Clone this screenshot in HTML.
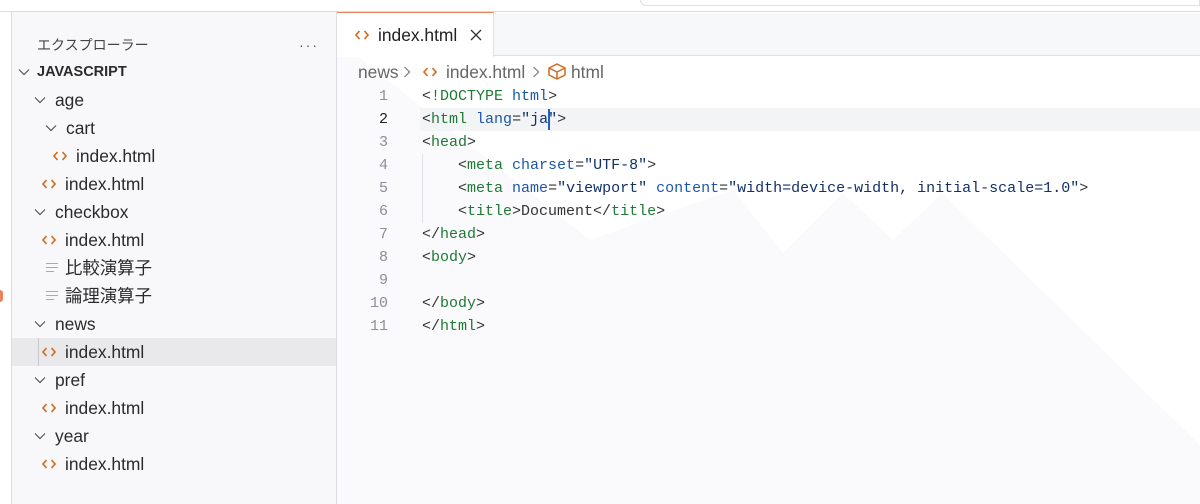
<!DOCTYPE html>
<html><head><meta charset="utf-8">
<style>
*{margin:0;padding:0;box-sizing:border-box}
body{width:1200px;height:504px;overflow:hidden;background:#fff;position:relative;font-family:"Liberation Sans","Noto Sans CJK JP",sans-serif;color:#333}
.abs{position:absolute}
#top{left:0;top:0;width:1200px;height:12px;background:#fff;border-bottom:1px solid #dcdde2}
#side{left:11px;top:12px;width:326px;height:492px;background:#f8f8fa;border-left:1px solid #dcdde2;border-right:1px solid #dcdde2}
.row{position:absolute;left:0;width:324px;height:28px;line-height:28px;font-size:17.4px;color:#2b2b2b;white-space:nowrap}
.chev{position:absolute;top:10px}
.ic{position:absolute;top:9px}
.lines{position:absolute;width:12px}
.lines i{display:block;height:1.2px;background:#aaa;margin-bottom:2.6px}
#tabbar{left:337px;top:13px;width:863px;height:43px;background:#f7f8fa;border-bottom:1px solid #dde0e8}
#tab{left:337px;top:12px;width:157px;height:45px;background:#fff;border-top:1px solid #e8835a;border-right:1px solid #dde0e8}
.code{position:absolute;left:422px;font-family:"Liberation Mono",monospace;font-size:15px;line-height:23px;white-space:pre;color:#333}
.ln{position:absolute;left:340px;width:48px;text-align:right;font-family:"Liberation Mono",monospace;font-size:15px;line-height:23px;color:#8a8f99}
.t{color:#1e7a34}.a{color:#1c58a8}.s{color:#13306a}
</style></head><body>
<svg width="0" height="0" style="position:absolute"><defs>
<symbol id="h" viewBox="0 0 14 10"><path d="M4.5 1 L1 5 L4.5 9 M9.5 1 L13 5 L9.5 9" fill="none" stroke="#d2691e" stroke-width="1.6"/></symbol>
<symbol id="c" viewBox="0 0 12 8"><path d="M1 1.5 L6 6.5 L11 1.5" fill="none" stroke="#555" stroke-width="1.2"/></symbol>
</defs></svg>
<div id="top" class="abs"></div>
<div class="abs" style="left:640px;top:0;width:560px;height:6px;border:1px solid #e0e0e0;border-top:none;border-radius:0 0 0 6px"></div>
<div id="side" class="abs">
 <div class="row" style="top:19px;left:25px;font-size:14px;color:#444">エクスプローラー</div>
 <div class="row" style="top:19px;left:287px;font-size:14px;color:#555;letter-spacing:2px">···</div>
 <div class="row" style="top:46px;left:0"><svg class="chev" style="left:6px" width="12" height="8"><use href="#c"/></svg><span style="position:absolute;left:25px;font-weight:bold;font-size:14.5px">JAVASCRIPT</span></div>
 <div class="row" style="top:74px"><svg class="chev" style="left:22px" width="12" height="8"><use href="#c"/></svg><span style="position:absolute;left:43px">age</span></div>
 <div class="row" style="top:102px"><svg class="chev" style="left:33px" width="12" height="8"><use href="#c"/></svg><span style="position:absolute;left:54px">cart</span></div>
 <div class="row" style="top:130px"><svg class="ic" style="left:41px" width="14" height="10"><use href="#h"/></svg><span style="position:absolute;left:64px">index.html</span></div>
 <div class="row" style="top:158px"><svg class="ic" style="left:30px" width="14" height="10"><use href="#h"/></svg><span style="position:absolute;left:53px">index.html</span></div>
 <div class="row" style="top:186px"><svg class="chev" style="left:22px" width="12" height="8"><use href="#c"/></svg><span style="position:absolute;left:43px">checkbox</span></div>
 <div class="row" style="top:214px"><svg class="ic" style="left:30px" width="14" height="10"><use href="#h"/></svg><span style="position:absolute;left:53px">index.html</span></div>
 <div class="row" style="top:242px"><span class="lines" style="left:34px;top:9px"><i></i><i></i><i style="width:8px"></i></span><span style="position:absolute;left:53px">比較演算子</span></div>
 <div class="row" style="top:270px"><span class="lines" style="left:34px;top:9px"><i></i><i></i><i style="width:8px"></i></span><span style="position:absolute;left:53px">論理演算子</span></div>
 <div class="row" style="top:298px"><svg class="chev" style="left:22px" width="12" height="8"><use href="#c"/></svg><span style="position:absolute;left:43px">news</span></div>
 <div class="row" style="top:326px;background:#e9e9ec"><span style="position:absolute;left:26px;top:0;width:1px;height:28px;background:#c8c8cc"></span><svg class="ic" style="left:30px" width="14" height="10"><use href="#h"/></svg><span style="position:absolute;left:53px">index.html</span></div>
 <div class="row" style="top:354px"><svg class="chev" style="left:22px" width="12" height="8"><use href="#c"/></svg><span style="position:absolute;left:43px">pref</span></div>
 <div class="row" style="top:382px"><svg class="ic" style="left:30px" width="14" height="10"><use href="#h"/></svg><span style="position:absolute;left:53px">index.html</span></div>
 <div class="row" style="top:410px"><svg class="chev" style="left:22px" width="12" height="8"><use href="#c"/></svg><span style="position:absolute;left:43px">year</span></div>
 <div class="row" style="top:438px"><svg class="ic" style="left:30px" width="14" height="10"><use href="#h"/></svg><span style="position:absolute;left:53px">index.html</span></div>
</div>
<div class="abs" style="left:0;top:290px;width:3px;height:12px;background:#e8835a;border-radius:0 3px 3px 0"></div>
<svg class="abs" style="left:0;top:0" width="1200" height="504"><polygon points="337,40 590,240 733,190 783,253 843,193 893,240 942,193 1200,445 1200,504 337,504" fill="#fafafc"/></svg>
<div id="tabbar" class="abs"></div>
<div id="tab" class="abs">
 <svg class="abs" style="left:18px;top:17px" width="14" height="10"><use href="#h"/></svg>
 <span class="abs" style="left:41px;top:12px;font-size:17.4px;color:#222">index.html</span>
 <svg class="abs" style="left:133px;top:16px" width="12" height="12"><path d="M1 1 L11 11 M11 1 L1 11" stroke="#333" stroke-width="1.3"/></svg>
</div>
<div class="abs" style="left:358px;top:62px;font-size:17.4px;color:#666">news</div>
<svg class="abs" style="left:403px;top:66px" width="8" height="12"><path d="M1.5 1 L6.5 6 L1.5 11" fill="none" stroke="#777" stroke-width="1.2"/></svg>
<svg class="abs" style="left:423px;top:67px" width="14" height="10"><use href="#h"/></svg>
<div class="abs" style="left:446px;top:62px;font-size:17.4px;color:#666">index.html</div>
<svg class="abs" style="left:532px;top:66px" width="8" height="12"><path d="M1.5 1 L6.5 6 L1.5 11" fill="none" stroke="#777" stroke-width="1.2"/></svg>
<svg class="abs" style="left:547px;top:63px" width="20" height="18" viewBox="0 0 20 18"><path d="M2 5 L10 1 L18 5 L18 12 L10 16 L2 12 Z M2 5 L10 9 L18 5 M10 9 L10 16" fill="none" stroke="#d2691e" stroke-width="1.5" stroke-linejoin="round"/></svg>
<div class="abs" style="left:571px;top:62px;font-size:17.4px;color:#666">html</div>
<div class="abs" style="left:420px;top:108px;width:780px;height:23px;background:#f3f4f6"></div>
<div class="abs" style="left:422px;top:154px;width:1px;height:69px;background:#e2e2e6"></div>
<div class="ln" style="top:85px">1<br><span style="color:#222">2</span><br>3<br>4<br>5<br>6<br>7<br>8<br>9<br>10<br>11</div>
<div class="code" style="top:85px">&lt;<span class="t">!DOCTYPE</span> <span class="a">html</span>&gt;
&lt;<span class="t">html</span> <span class="a">lang</span>=<span class="s">"ja"</span>&gt;
&lt;<span class="t">head</span>&gt;
    &lt;<span class="t">meta</span> <span class="a">charset</span>=<span class="s">"UTF-8"</span>&gt;
    &lt;<span class="t">meta</span> <span class="a">name</span>=<span class="s">"viewport"</span> <span class="a">content</span>=<span class="s">"width=device-width, initial-scale=1.0"</span>&gt;
    &lt;<span class="t">title</span>&gt;Document&lt;/<span class="t">title</span>&gt;
&lt;/<span class="t">head</span>&gt;
&lt;<span class="t">body</span>&gt;

&lt;/<span class="t">body</span>&gt;
&lt;/<span class="t">html</span>&gt;</div>
<div class="abs" style="left:548px;top:109px;width:2px;height:21px;background:#1d5fd1"></div>
</body></html>
